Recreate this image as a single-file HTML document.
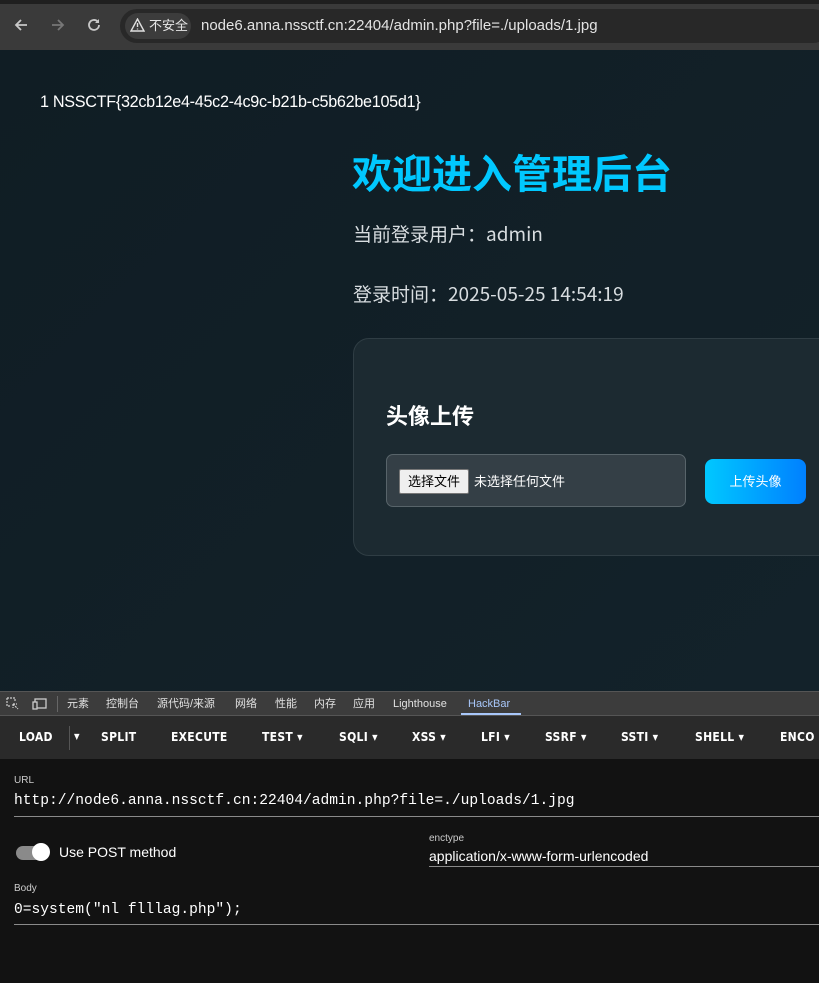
<!DOCTYPE html>
<html><head><meta charset="utf-8"><style>
*{margin:0;padding:0;box-sizing:border-box}
body{width:819px;height:983px;overflow:hidden;background:#111f26;font-family:"Liberation Sans","Noto Sans CJK SC",sans-serif;position:relative}
.top{position:absolute;left:0;top:0;width:819px;height:50px;background:#3a3a3a}
.tabstrip{position:absolute;left:0;top:0;width:819px;height:4px;background:#1f1f1f}
.omni{position:absolute;left:120px;top:9px;width:710px;height:34px;border-radius:17px;background:#282828}
.chip{position:absolute;left:125px;top:13px;width:66px;height:26px;border-radius:13px;background:#3c3c3c;color:#e6e6e6;font-size:13px;line-height:26px;padding-left:24px}
.url{position:absolute;left:201px;top:17px;color:#e3e3e3;font-size:15px}
.page{position:absolute;left:0;top:50px;width:819px;height:641px;background:linear-gradient(135deg,#101d24,#13222a)}
.flag{position:absolute;left:40px;top:93px;color:#fff;font-size:16.2px;letter-spacing:-0.3px}
h1{position:absolute;left:352px;top:142px;color:#00c8ff;font-size:40px;font-weight:bold;font-family:"Noto Sans CJK SC",sans-serif;letter-spacing:0px}
.t{position:absolute;left:353px;color:#d8dde0;font-size:19px;font-family:"Noto Sans CJK SC",sans-serif}
.card{position:absolute;left:353px;top:338px;width:500px;height:218px;border:1px solid #2f3d44;border-radius:16px;background:#1c2a31}
.card h2{position:absolute;left:32px;top:60px;color:#fff;font-size:22px;font-family:"Noto Sans CJK SC",sans-serif}
.file{position:absolute;left:32px;top:115px;width:300px;height:53px;border:1px solid #58646a;border-radius:7px;background:#343f46}
.fbtn{position:absolute;left:12px;top:14px;width:70px;height:25px;background:#efefef;border:1px solid #777;border-radius:2px;font-size:13px;line-height:23px;text-align:center;color:#000}
.ftxt{position:absolute;left:87px;top:15px;color:#fff;font-size:13px;line-height:23px}
.up{position:absolute;left:351px;top:120px;width:101px;height:45px;border-radius:8px;background:linear-gradient(90deg,#00c8ff,#0080ff);color:#fff;font-size:13px;line-height:45px;text-align:center}
.dtabs{position:absolute;left:0;top:691px;width:819px;height:25px;background:#3c3c3c;border-top:1px solid #555;border-bottom:1px solid #555;font-size:11px;color:#e0e0e0}
.dtabs span{position:absolute;top:5px;line-height:14px}
.hb{position:absolute;left:0;top:716px;width:819px;height:43px;background:#2a2a2a;font-family:"DejaVu Sans Condensed","Liberation Sans",sans-serif;font-weight:bold;font-size:12px;color:#fff}
.hb span{position:absolute;top:14px;letter-spacing:.3px}
.main{position:absolute;left:0;top:759px;width:819px;height:224px;background:#121212;color:#fff}
.lbl{position:absolute;font-size:10px;color:#ccc}
.mono{position:absolute;font-family:"Liberation Mono",monospace;font-size:14.6px;color:#fff}
.line{position:absolute;height:1px;background:#8a8a8a}
</style></head><body>
<div class="top"><div class="tabstrip"></div>
<svg style="position:absolute;left:13px;top:17px" width="16" height="16" viewBox="0 0 16 16"><path d="M14 8H3M8 3L3 8l5 5" stroke="#c8c8c8" stroke-width="1.8" fill="none"/></svg>
<svg style="position:absolute;left:50px;top:17px" width="16" height="16" viewBox="0 0 16 16"><path d="M2 8h11M8 3l5 5-5 5" stroke="#777" stroke-width="1.8" fill="none"/></svg>
<svg style="position:absolute;left:86px;top:17px" width="16" height="16" viewBox="0 0 16 16"><path d="M13 8a5 5 0 1 1-1.5-3.6" stroke="#c8c8c8" stroke-width="1.8" fill="none"/><path d="M13 2v4H9z" fill="#c8c8c8"/></svg>
<div class="omni"></div>
<div class="chip">不安全</div>
<svg style="position:absolute;left:130px;top:18px" width="15" height="14" viewBox="0 0 15 14"><path d="M7.5 1L14 13H1z" stroke="#e0e0e0" stroke-width="1.4" fill="none"/><path d="M7.5 5v4M7.5 10.5v1" stroke="#e0e0e0" stroke-width="1.4"/></svg>
<div class="url">node6.anna.nssctf.cn:22404/admin.php?file=./uploads/1.jpg</div>
</div>
<div class="page"></div>
<div class="flag">1 NSSCTF{32cb12e4-45c2-4c9c-b21b-c5b62be105d1}</div>
<h1>欢迎进入管理后台</h1>
<div class="t" style="top:220px">当前登录用户：admin</div>
<div class="t" style="top:280px">登录时间：2025-05-25 14:54:19</div>
<div class="card"><h2>头像上传</h2>
<div class="file"><div class="fbtn">选择文件</div><div class="ftxt">未选择任何文件</div></div>
<div class="up">上传头像</div></div>
<div class="dtabs">
<svg style="position:absolute;left:6px;top:5px" width="14" height="14" viewBox="0 0 14 14"><path d="M1 1h8v3M1 1v8h3M7 7l5 5M7 7h4M7 7v4" stroke="#ccc" stroke-width="1.2" fill="none" stroke-dasharray="2 1"/></svg>
<svg style="position:absolute;left:32px;top:5px" width="16" height="14" viewBox="0 0 16 14"><rect x="3" y="2" width="11" height="9" stroke="#ccc" fill="none" stroke-width="1.3"/><rect x="1" y="5" width="4" height="7" stroke="#ccc" fill="#3c3c3c" stroke-width="1.3"/></svg>
<div style="position:absolute;left:57px;top:4px;width:1px;height:16px;background:#666"></div>
<span style="left:67px">元素</span><span style="left:106px">控制台</span><span style="left:157px">源代码/来源</span><span style="left:235px">网络</span><span style="left:275px">性能</span><span style="left:314px">内存</span><span style="left:353px">应用</span><span style="left:393px">Lighthouse</span><span style="left:468px;color:#a8c7fa">HackBar</span>
<div style="position:absolute;left:461px;top:21px;width:60px;height:2px;background:#a8c7fa"></div>
</div>
<div class="hb">
<span style="left:19px">LOAD</span><div style="position:absolute;left:69px;top:10px;width:1px;height:24px;background:#555"></div><span style="left:74px;font-size:8px;top:16px">▼</span>
<span style="left:101px">SPLIT</span><span style="left:171px">EXECUTE</span><span style="left:262px">TEST ▾</span><span style="left:339px">SQLI ▾</span><span style="left:412px">XSS ▾</span><span style="left:481px">LFI ▾</span><span style="left:545px">SSRF ▾</span><span style="left:621px">SSTI ▾</span><span style="left:695px">SHELL ▾</span><span style="left:780px">ENCO</span>
</div>
<div class="main">
<div class="lbl" style="left:14px;top:16px">URL</div>
<div class="mono" style="left:14px;top:34px">http://node6.anna.nssctf.cn:22404/admin.php?file=./uploads/1.jpg</div>
<div class="line" style="left:14px;top:57px;width:805px"></div>
<div style="position:absolute;left:16px;top:87px;width:30px;height:14px;border-radius:7px;background:#8a8a8a"></div>
<div style="position:absolute;left:32px;top:84px;width:18px;height:18px;border-radius:9px;background:#fff"></div>
<div style="position:absolute;left:59px;top:85px;font-size:14px">Use POST method</div>
<div class="lbl" style="left:429px;top:74px">enctype</div>
<div style="position:absolute;left:429px;top:89px;font-size:14px">application/x-www-form-urlencoded</div>
<div class="line" style="left:429px;top:107px;width:390px"></div>
<div class="lbl" style="left:14px;top:124px">Body</div>
<div class="mono" style="left:14px;top:143px">0=system("nl flllag.php");</div>
<div class="line" style="left:14px;top:165px;width:805px"></div>
</div>
</body></html>
